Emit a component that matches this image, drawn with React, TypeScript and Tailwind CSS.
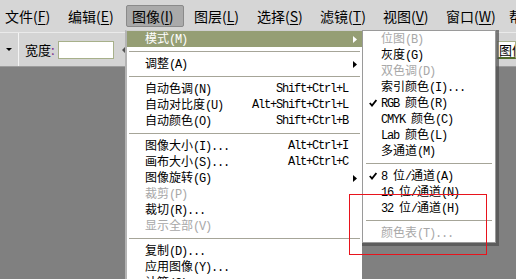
import React from "react";

const menuBar = [
  ["文件", "F"],
  ["编辑", "E"],
  ["图像", "I"],
  ["图层", "L"],
  ["选择", "S"],
  ["滤镜", "T"],
  ["视图", "V"],
  ["窗口", "W"],
  ["帮助", "H"],
];

type Item =
  | { sep: true }
  | { label: string; key?: string; off?: boolean; sub?: boolean; hot?: boolean; check?: boolean };

const mainItems: Item[] = [
  { label: "模式(M)", sub: true, hot: true },
  { sep: true },
  { label: "调整(A)", sub: true },
  { sep: true },
  { label: "自动色调(N)", key: "Shift+Ctrl+L" },
  { label: "自动对比度(U)", key: "Alt+Shift+Ctrl+L" },
  { label: "自动颜色(O)", key: "Shift+Ctrl+B" },
  { sep: true },
  { label: "图像大小(I)...", key: "Alt+Ctrl+I" },
  { label: "画布大小(S)...", key: "Alt+Ctrl+C" },
  { label: "图像旋转(G)", sub: true },
  { label: "裁剪(P)", off: true },
  { label: "裁切(R)..." },
  { label: "显示全部(V)", off: true },
  { sep: true },
  { label: "复制(D)..." },
  { label: "应用图像(Y)..." },
  { label: "计算(C)..." },
];

const modeItems: Item[] = [
  { label: "位图(B)", off: true },
  { label: "灰度(G)" },
  { label: "双色调(D)", off: true },
  { label: "索引颜色(I)..." },
  { label: "RGB 颜色(R)", check: true },
  { label: "CMYK 颜色(C)" },
  { label: "Lab 颜色(L)" },
  { label: "多通道(M)" },
  { sep: true },
  { label: "8 位/通道(A)", check: true },
  { label: "16 位/通道(N)" },
  { label: "32 位/通道(H)" },
  { sep: true },
  { label: "颜色表(T)...", off: true },
];

// half-width ascii runs in the old bitmap font are 6px wide
function Txt({ s }: { s: string }) {
  const parts = s.split(/([\x20-\x7e]+)/);
  return (
    <>
      {parts.map((p, i) =>
        /[\x20-\x7e]/.test(p) ? (
          <span key={i} className="[font-family:'Liberation_Mono',monospace] text-[12px] tracking-[-1.2px]">
            {p}
          </span>
        ) : (
          <span key={i}>{p}</span>
        )
      )}
    </>
  );
}

function Arrow({ white }: { white?: boolean }) {
  return (
    <svg width="4" height="7" viewBox="0 0 4 7" className="shrink-0">
      <path d="M0 0 L4 3.5 L0 7 Z" fill={white ? "#ffffff" : "#000000"} />
    </svg>
  );
}

function Check() {
  return (
    <svg width="8" height="8" viewBox="0 0 8 8" className="absolute left-[5px] top-[4px]">
      <path d="M0.8 4 L3 6.6 L7.4 1" fill="none" stroke="#000" strokeWidth="1.8" />
    </svg>
  );
}

function Menu({ items, pl, className }: { items: Item[]; pl: string; className: string }) {
  return (
    <div className={className}>
      {items.map((it, i) =>
        "sep" in it ? (
          <div key={i} className="h-[9px] flex items-center px-[2px]">
            <div className="h-px w-full bg-[#a6a598]" />
          </div>
        ) : (
          <div
            key={i}
            className={`relative h-[16px] flex items-center ${pl} pr-[5px] text-[12px] leading-none whitespace-nowrap ${
              it.hot ? "bg-[#959e74] text-white" : it.off ? "text-[#a8a8a8]" : "text-black"
            }`}
          >
            {it.check && <Check />}
            <span className="flex-1">
              <Txt s={it.label} />
            </span>
            {it.key && (
              <span className="mr-[9px] [font-family:'Liberation_Mono',monospace] text-[12px] tracking-[-1.2px]">
                {it.key}
              </span>
            )}
            {it.sub && <Arrow white={it.hot} />}
          </div>
        )
      )}
    </div>
  );
}

export default function App() {
  return (
    <div className="relative w-[516px] h-[279px] overflow-hidden bg-[#808080] flex flex-col [font-family:'Noto_Sans_CJK_SC',sans-serif]">
      {/* menu bar */}
      <div className="h-[32px] shrink-0 bg-[#d6d6d6] flex items-center gap-[5px] whitespace-nowrap">
        {menuBar.map(([t, k]) => (
          <div
            key={t}
            className={`w-[58px] h-[22px] shrink-0 flex items-center pl-[5px] text-[14px] leading-none text-black ${
              t === "图像" ? "bg-[#aaaaaa] border border-[#8a8a8a] rounded-[2px] pl-[4px]" : ""
            }`}
          >
            {t}(<span className="underline underline-offset-2">{k}</span>)
          </div>
        ))}
      </div>

      {/* options bar */}
      <div className="h-[35px] shrink-0 bg-[#d4d4d4] border-t border-[#eaeaea] border-b border-b-[#9c9c9c] flex items-center text-[13px] text-black">
        <div className="w-[18px] flex justify-center">
          <svg width="6" height="3" viewBox="0 0 6 3">
            <path d="M0 0 H6 L3 3 Z" fill="#000" />
          </svg>
        </div>
        <div className="w-px self-stretch bg-[#8c8c8c] border-r border-[#f4f4f4]" />
        <span className="ml-[6px] leading-none">
          宽度<span className="text-[#7a2a8c]">:</span>
        </span>
        <div className="ml-[3px] w-[56px] h-[18px] bg-white border border-[#a7b08a]" />
        <svg width="8" height="8" viewBox="0 0 8 8" className="ml-[8px]">
          <path d="M0 4 L3 1 V7 Z M8 4 L5 1 V7 Z" fill="#555" />
        </svg>
        <div className="flex-1" />
        <div className="h-[18px] pl-[1px] w-[19px] bg-white border border-[#a7b08a] border-b-2 border-b-[#4f6a2a] text-[13px] leading-none flex items-center overflow-hidden whitespace-nowrap">
          图像
        </div>
      </div>

      <div className="flex-1" />

      {/* 图像 menu */}
      <Menu
        items={mainItems}
        pl="pl-[18px]"
        className="absolute left-[125px] top-[30px] w-[237px] h-[260px] bg-white border-l-2 border-l-[#b4b4b4] border-t border-t-[#d0d0d0]"
      />

      {/* 模式 submenu */}
      <div className="absolute left-[362px] top-[30px] w-[137px] h-[216px] bg-[#4f4f4f]/70 pr-[3px] pb-[3px]">
        <Menu
          items={modeItems}
          pl="pl-[17px]"
          className="w-[134px] h-[213px] bg-white border border-[#9a9a9a] px-[1px]"
        />
      </div>

      {/* red annotation box */}
      <div className="absolute left-[349px] top-[194px] w-[138px] h-[61px] border-[1.5px] border-[#e8131c]" />
    </div>
  );
}
